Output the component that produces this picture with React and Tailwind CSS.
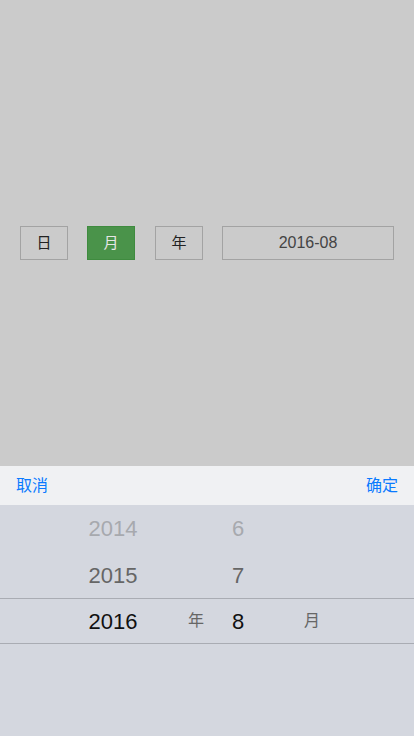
import { useState } from "react";

const modes = ["日", "月", "年"];

export default function App() {
    const [mode, setMode] = useState("月");

    return (
        <div className="w-[414px] h-[736px] flex flex-col bg-[#cbcbcb] font-['Liberation_Sans','Noto_Sans_CJK_SC',sans-serif] overflow-hidden">
            {/* 上部：切换按钮 */}
            <div className="h-[466px] pt-[226px] px-[20px]">
                <div className="flex items-center">
                    {modes.map((m, i) => (
                        <button
                            key={m}
                            onClick={() => setMode(m)}
                            className={
                                "w-[48px] h-[34px] border text-[15px] " +
                                (i === 1 ? "ml-[19px] " : i === 2 ? "ml-[20px] " : "") +
                                (mode === m
                                    ? "bg-[#4a934a] border-[#3f8b3f] text-[#e6e6e6]"
                                    : "bg-[#cbcbcb] border-[#a3a3a3] text-[#222]")
                            }
                        >
                            {m}
                        </button>
                    ))}
                    <div className="ml-[19px] w-[172px] h-[34px] border border-[#a3a3a3] flex items-center justify-center text-[16px] text-[#444]">
                        2016-08
                    </div>
                </div>
            </div>

            {/* 工具栏 */}
            <div className="h-[39px] bg-[#f0f1f3] flex items-center justify-between px-[16px] text-[16px] text-[#0a7aff]">
                <span>取消</span>
                <span>确定</span>
            </div>

            {/* 滚轮 */}
            <div className="flex-1 bg-[#d4d7df]">
                <div className="h-[47px] flex items-center pl-[63px] text-[22px] text-[#a7a9ae]">
                    <span className="w-[100px] text-center">2014</span>
                    <span className="ml-[17px] w-[32px]"></span>
                    <span className="w-[52px] text-center">6</span>
                </div>
                <div className="h-[46px] flex items-center pl-[63px] text-[22px] text-[#666]">
                    <span className="w-[100px] text-center">2015</span>
                    <span className="ml-[17px] w-[32px]"></span>
                    <span className="w-[52px] text-center">7</span>
                </div>
                <div className="h-[46px] flex items-center pl-[63px] border-y border-[#a9acb3] text-[#111]">
                    <span className="w-[100px] text-center text-[22px]">2016</span>
                    <span className="ml-[17px] w-[32px] text-center text-[16px] text-[#666]">年</span>
                    <span className="w-[52px] text-center text-[22px]">8</span>
                    <span className="ml-[32px] w-[32px] text-center text-[16px] text-[#666]">月</span>
                </div>
            </div>
        </div>
    );
}
